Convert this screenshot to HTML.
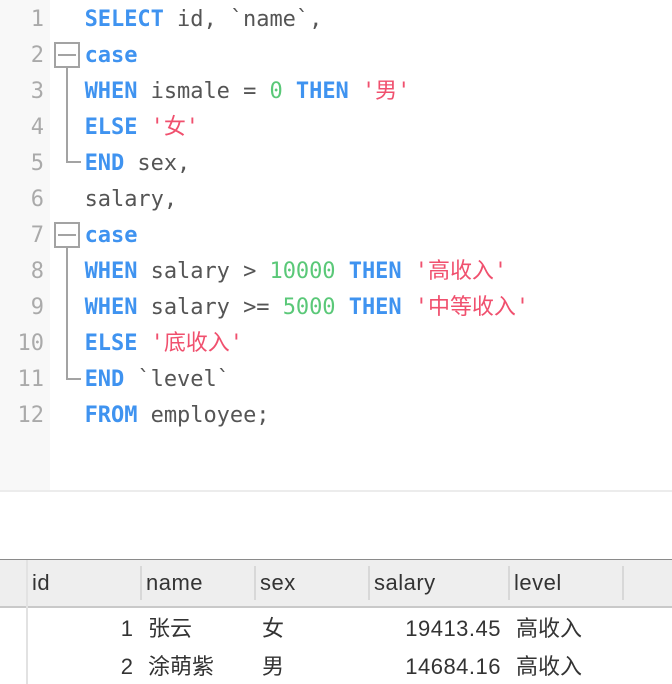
<!DOCTYPE html>
<html><head><meta charset="utf-8"><style>
html,body{margin:0;padding:0;background:#fff;width:672px;height:684px;overflow:hidden}
body{position:relative}
.a{position:absolute}
.g{left:0;top:0;width:50px;height:490px;background:#f8f8f8}
.n,.c{position:absolute;font:22px/36px "DejaVu Sans Mono","Noto Sans CJK SC",monospace;white-space:pre;height:36px}
.n{right:628px;color:#aaa;text-align:right}
.c{left:84.6px;color:#555;letter-spacing:-.04px}
b{color:#3f93f0;font-weight:bold}
i{font-style:normal;color:#5ac878}
u{text-decoration:none;color:#f0506e}
.t{position:absolute;font:22px/36px "Liberation Sans","Noto Sans CJK SC",sans-serif;color:#333;white-space:pre}
.l{letter-spacing:.5px}
.s{position:absolute;top:566px;height:34px;width:2px;background:#d8d8d8}
</style></head><body>
<div class="a g"></div>
<div class="n" style="top:2px">1</div>
<div class="n" style="top:38px">2</div>
<div class="n" style="top:74px">3</div>
<div class="n" style="top:110px">4</div>
<div class="n" style="top:146px">5</div>
<div class="n" style="top:182px">6</div>
<div class="n" style="top:218px">7</div>
<div class="n" style="top:254px">8</div>
<div class="n" style="top:290px">9</div>
<div class="n" style="top:326px">10</div>
<div class="n" style="top:362px">11</div>
<div class="n" style="top:398px">12</div>
<div class="c" style="top:2px"><b>SELECT</b> id, `name`,</div>
<div class="c" style="top:38px"><b>case</b></div>
<div class="c" style="top:74px"><b>WHEN</b> ismale = <i>0</i> <b>THEN</b> <u>'男'</u></div>
<div class="c" style="top:110px"><b>ELSE</b> <u>'女'</u></div>
<div class="c" style="top:146px"><b>END</b> sex,</div>
<div class="c" style="top:182px">salary,</div>
<div class="c" style="top:218px"><b>case</b></div>
<div class="c" style="top:254px"><b>WHEN</b> salary &gt; <i>10000</i> <b>THEN</b> <u>'高收入'</u></div>
<div class="c" style="top:290px"><b>WHEN</b> salary &gt;= <i>5000</i> <b>THEN</b> <u>'中等收入'</u></div>
<div class="c" style="top:326px"><b>ELSE</b> <u>'底收入'</u></div>
<div class="c" style="top:362px"><b>END</b> `level`</div>
<div class="c" style="top:398px"><b>FROM</b> employee;</div>
<svg class="a" style="left:0;top:0" width="100" height="440" fill="none" stroke="#a3a3a3" stroke-width="2">
<rect x="55" y="43" width="24" height="24"/><path d="M58 55H76"/><path d="M67 67V162H81"/>
<rect x="55" y="223" width="24" height="24"/><path d="M58 235H76"/><path d="M67 247V379H81"/>
</svg>
<div class="a" style="left:0;top:490px;width:672px;height:2px;background:#ececec"></div>
<div class="a" style="left:0;top:559px;width:672px;height:47px;background:#eee"></div>
<div class="a" style="left:0;top:559px;width:672px;height:1px;background:#8a8a8a"></div>
<div class="a" style="left:0;top:606px;width:672px;height:2px;background:#c9c9c9"></div>
<div class="a" style="left:26px;top:560px;width:2px;height:124px;background:#e2e2e2"></div>
<div class="s" style="left:140px"></div>
<div class="s" style="left:254px"></div>
<div class="s" style="left:368px"></div>
<div class="s" style="left:508px"></div>
<div class="s" style="left:622px"></div>
<div class="t l" style="left:32px;top:565px">id</div>
<div class="t l" style="left:146px;top:565px">name</div>
<div class="t l" style="left:260px;top:565px">sex</div>
<div class="t l" style="left:374px;top:565px">salary</div>
<div class="t l" style="left:514px;top:565px">level</div>
<div class="t" style="right:539px;top:611px">1</div>
<div class="t" style="left:148px;top:611px">张云</div>
<div class="t" style="left:262px;top:611px">女</div>
<div class="t l" style="right:171px;top:611px">19413.45</div>
<div class="t" style="left:516px;top:611px">高收入</div>
<div class="t" style="right:539px;top:649px">2</div>
<div class="t" style="left:148px;top:649px">涂萌紫</div>
<div class="t" style="left:262px;top:649px">男</div>
<div class="t l" style="right:171px;top:649px">14684.16</div>
<div class="t" style="left:516px;top:649px">高收入</div>
</body></html>
